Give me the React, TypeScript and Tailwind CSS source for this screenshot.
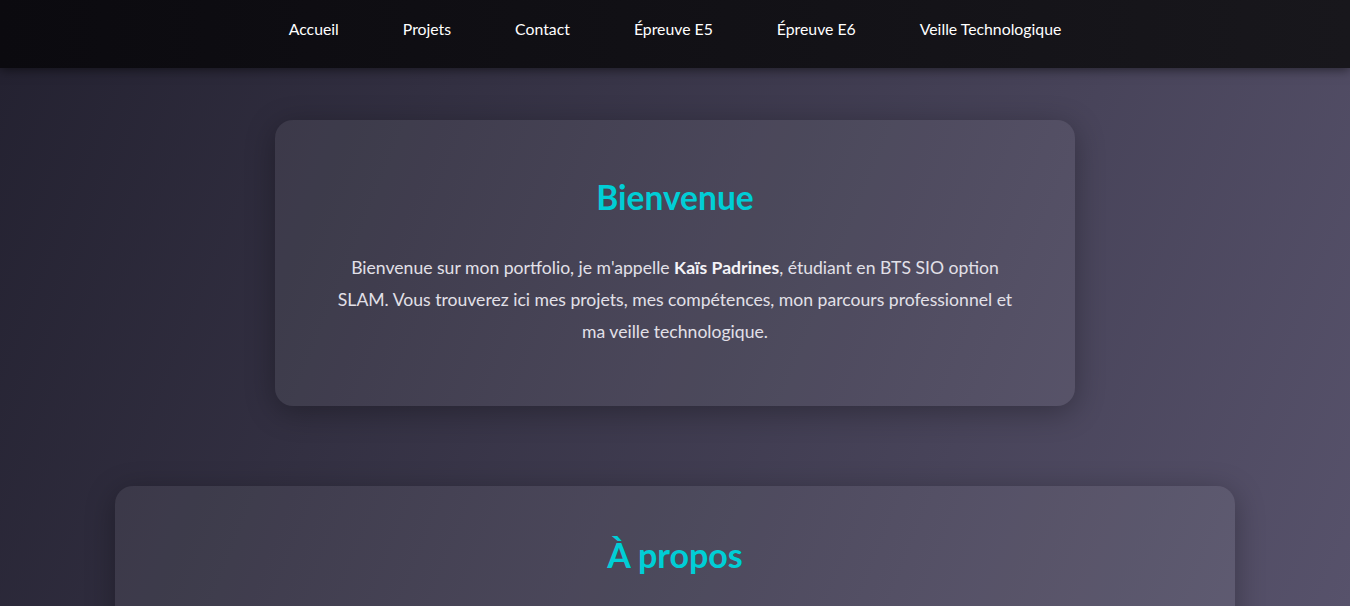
import React from "react";

const font = { fontFamily: "Lato, 'Noto Sans', 'Liberation Sans', sans-serif" };

const links = ["Accueil", "Projets", "Contact", "Épreuve E5", "Épreuve E6", "Veille Technologique"];

export default function App() {
  return (
    <div
      style={font}
      className="min-h-screen bg-fixed bg-[linear-gradient(112deg,#232130,#57526b)] text-[#e4e2ea]"
    >
      <header className="relative z-10 h-[68px] bg-[linear-gradient(90deg,#0b0a0f,#18171c)] shadow-[0_2px_10px_rgba(0,0,0,0.5)]">
        <nav className="flex h-full items-center justify-center gap-[64px] pb-[10px]">
          {links.map((l) => (
            <a key={l} href="#" className="text-[15.8px] text-white">
              {l}
            </a>
          ))}
        </nav>
      </header>

      <main className="flex flex-col items-center gap-[80px] pb-[80px] pt-[52px]">
        <section className="w-[800px] rounded-[18px] bg-white/[0.065] px-[60px] pb-[58px] pt-[56px] text-center shadow-[0_6px_30px_rgba(0,0,0,0.3)]">
          <h2 className="text-[33.5px] font-bold leading-[42px] text-[#00ced6]">Bienvenue</h2>
          <p className="mt-[34px] text-[17.6px] leading-[32px] text-[#e2e0e8]">
            Bienvenue sur mon portfolio, je m'appelle <strong className="font-bold text-[#f4f3f7]">Kaïs Padrines</strong>, étudiant en BTS SIO option SLAM. Vous trouverez ici mes projets, mes compétences, mon parcours professionnel et ma veille technologique.
          </p>
        </section>

        <section className="w-[1120px] rounded-[18px] bg-white/[0.065] px-[60px] pb-[200px] pt-[48px] text-center shadow-[0_6px_30px_rgba(0,0,0,0.3)]">
          <h2 className="text-[34px] font-bold leading-[42px] text-[#00ced6]">À propos</h2>
        </section>
      </main>
    </div>
  );
}
